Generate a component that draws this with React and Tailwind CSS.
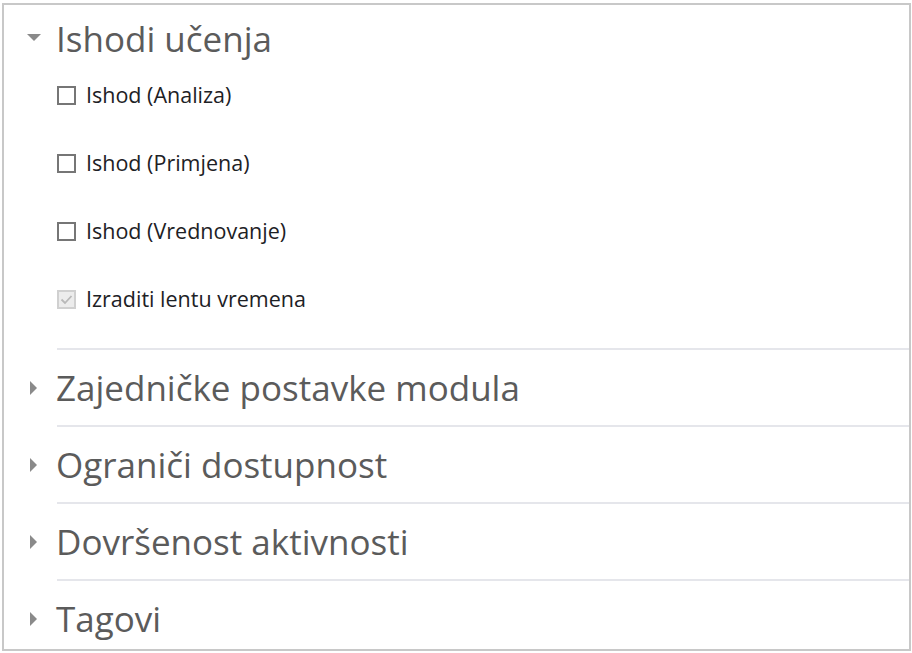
import React from "react";

const DownTri = () => (
  <svg width="16" height="10" viewBox="0 0 16 10" className="shrink-0">
    <polygon points="1,1 15,1 8,8" fill="#8a8a8a" />
  </svg>
);
const RightTri = () => (
  <svg width="10" height="16" viewBox="0 0 10 16" className="shrink-0">
    <polygon points="1,1 8,8 1,15" fill="#8a8a8a" />
  </svg>
);

const Box = ({ checked }) =>
  checked ? (
    <span className="w-[19px] h-[19px] border-2 border-[#d0d0d0] bg-[#ececec] flex items-center justify-center shrink-0">
      <svg width="13" height="11" viewBox="0 0 13 11">
        <polyline points="1.5,5.5 5,9 11.5,2" fill="none" stroke="#b8b8b8" strokeWidth="1.8" />
      </svg>
    </span>
  ) : (
    <span className="w-[19px] h-[19px] border-2 border-[#767676] bg-white shrink-0" />
  );

const items = [
  { t: "Ishod (Analiza)" },
  { t: "Ishod (Primjena)" },
  { t: "Ishod (Vrednovanje)" },
  { t: "Izraditi lentu vremena", c: true },
];

const sections = [
  "Zajedničke postavke modula",
  "Ograniči dostupnost",
  "Dovršenost aktivnosti",
  "Tagovi",
];

export default function App() {
  return (
    <div className="w-[912px] h-[653px] bg-white pt-[3px] pl-[2px]" style={{ fontFamily: '"Open Sans", sans-serif' }}>
      <div className="w-[909px] h-[648px] border-2 border-[#c8c8c8] bg-white overflow-hidden">
        <div className="h-[56px] pt-[10px] flex items-center pl-[22px]">
          <DownTri />
          <span className="ml-[14px] text-[35px] text-[#5b5b5b] leading-none">Ishodi učenja</span>
        </div>
        <div className="flex flex-col pl-[53px]">
          {items.map((it) => (
            <div key={it.t} className="h-[68px] flex items-center">
              <Box checked={it.c} />
              <span className="ml-[10px] text-[21.5px] text-[#1d2125] leading-none">{it.t}</span>
            </div>
          ))}
        </div>
        <div className="h-[15px]" />
        {sections.map((s) => (
          <div key={s} className="flex flex-col">
            <div className="ml-[53px] border-t-2 border-[#e5e6eb]" />
            <div className="h-[75px] flex items-center pl-[25px]">
              <RightTri />
              <span className="ml-[17px] text-[35px] text-[#5b5b5b] leading-none">{s}</span>
            </div>
          </div>
        ))}
      </div>
    </div>
  );
}
